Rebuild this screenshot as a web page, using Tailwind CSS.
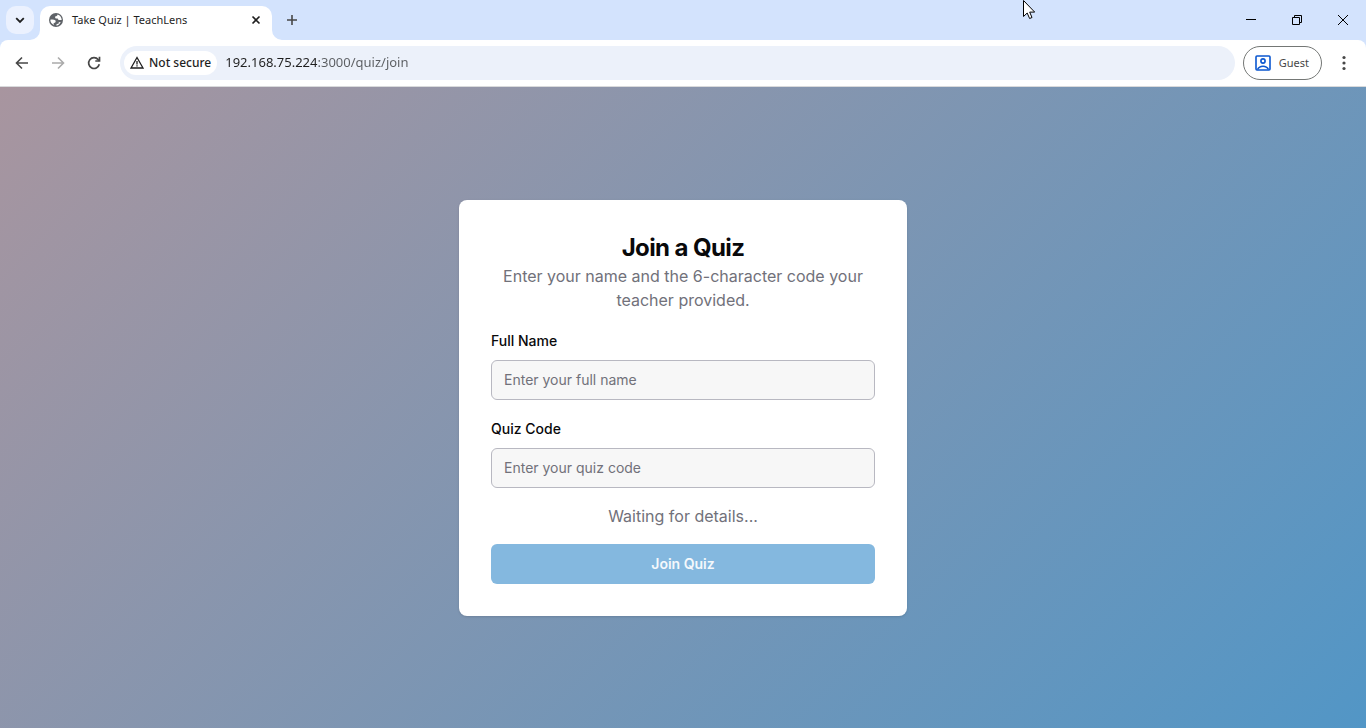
<!DOCTYPE html>
<html lang="en">
<head>
  <meta charset="UTF-8">
  <meta name="viewport" content="width=device-width, initial-scale=1.0">
  <title>Take Quiz | TeachLens</title>
  <script src="https://cdn.jsdelivr.net/npm/@tailwindcss/browser@4"></script>
</head>
<body class="relative flex flex-col min-h-screen bg-[#d3e3fd] font-['Noto_Sans',sans-serif] text-[#1f1f1f]">

  <!-- Tab strip -->
  <header class="flex items-start h-10 pl-1.5">
    <button type="button" aria-label="Search tabs" class="mt-1.5 flex size-7 items-center justify-center rounded-[10px] bg-[#ebf1fe]">
      <svg class="size-4" viewBox="0 0 16 16" fill="none" stroke="#1f1f1f" stroke-width="1.8"><path d="M4.2 6.2 8 10l3.8-3.8"/></svg>
    </button>
    <div class="relative ml-1.5 mt-1.5 flex h-[34px] w-58 items-center rounded-t-[10px] bg-white pl-2 pr-2 pb-1.5">
      <svg class="absolute bottom-0 -left-2.5 size-2.5" viewBox="0 0 10 10" fill="#fff"><path d="M10 0v10H0A10 10 0 0 0 10 0z"/></svg>
      <svg class="absolute bottom-0 -right-2.5 size-2.5" viewBox="0 0 10 10" fill="#fff"><path d="M0 0v10h10A10 10 0 0 1 0 0z"/></svg>
      <svg class="size-4" viewBox="0 0 16 16">
        <circle cx="8" cy="8" r="7" fill="#5f6368"/>
        <path fill="#fff" d="M9.600 2.400c-.2 1.200-.9 1.700-2.200 1.900-.5 1-.4 1.800.4 2.200l1.900.1c.4 1.300 1.300 1.700 2.500 1.400l1.500.1c0-2.700-1.700-5-4.100-5.700zM2.300 7.700c2.100-.4 3.900-.3 4.900.6.8.7.6 1.900-.3 2.400l-1.300.3.300 1.900c-2.100-.9-3.500-2.800-3.600-5.200zM8.500 13.700l.1-1.600 1.900-.3.300-1.500 1.900-.2c-.8 2-2.300 3.300-4.200 3.600z"/>
      </svg>
      <span class="ml-2 flex-1 text-[11px]">Take Quiz | TeachLens</span>
      <button type="button" aria-label="Close tab" class="flex size-4 items-center justify-center">
        <svg class="size-4" viewBox="0 0 16 16" fill="none" stroke="#1f1f1f" stroke-width="1.6"><path d="m4.500 4.500 7 7M11.500 4.500l-7 7"/></svg>
      </button>
    </div>
    <button type="button" aria-label="New tab" class="ml-3 mt-3 flex size-4 items-center justify-center">
      <svg class="size-4" viewBox="0 0 16 16" fill="none" stroke="#474747" stroke-width="1.6"><path d="M8 3v10M3 8h10"/></svg>
    </button>
    <div class="ml-auto flex h-10">
      <button type="button" aria-label="Minimize" class="flex w-[46px] items-center justify-center">
        <svg class="size-3" viewBox="0 0 12 12" fill="none" stroke="#000"><path d="M1 5.500h10"/></svg>
      </button>
      <button type="button" aria-label="Restore" class="flex w-[46px] items-center justify-center">
        <svg class="size-3" viewBox="0 0 12 12" fill="none" stroke="#000"><path d="M1.500 3.500h7v7h-7zM3.500 3.500v-2h7v7h-2"/></svg>
      </button>
      <button type="button" aria-label="Close" class="flex w-[46px] items-center justify-center">
        <svg class="size-3" viewBox="0 0 12 12" fill="none" stroke="#000"><path d="m1 1 10 10M11 1 1 11"/></svg>
      </button>
    </div>
  </header>

  <!-- Toolbar -->
  <nav class="flex h-[47px] items-center rounded-t-lg border-b border-[#d9dadc] bg-white pl-3 pr-3">
    <button type="button" aria-label="Back" class="flex size-5 items-center justify-center">
      <svg class="size-4" viewBox="0 0 16 16" fill="none" stroke="#474747" stroke-width="1.6"><path d="M14 8H3M8 2.500 2.500 8 8 13.500"/></svg>
    </button>
    <button type="button" aria-label="Forward" class="ml-4 flex size-5 items-center justify-center">
      <svg class="size-4" viewBox="0 0 16 16" fill="none" stroke="#ababab" stroke-width="1.6"><path d="M2 8h11M8 2.500 13.500 8 8 13.500"/></svg>
    </button>
    <button type="button" aria-label="Reload" class="ml-4 flex size-5 items-center justify-center">
      <svg class="size-4" viewBox="0 0 16 16" fill="none" stroke="#474747" stroke-width="1.7"><path d="M13.300 9.300A5.400 5.400 0 1 1 12.200 4.600L13.500 6"/><path d="M13.500 1.800V6H9.300"/></svg>
    </button>
    <div class="ml-4 flex h-[34px] flex-1 items-center rounded-full bg-[#ecf1fa] pl-1">
      <button type="button" class="flex h-6 items-center gap-1 rounded-full bg-white pl-[5px] pr-1.5 text-xs font-medium">
        <svg class="size-4" viewBox="0 0 16 16" fill="none" stroke="#1f1f1f" stroke-width="1.3"><path d="M8 2.500 14 13H2z"/><path d="M8 6v3.500M8 10.300v1.300"/></svg>
        Not secure
      </button>
      <!-- host is darker than the port and path -->
      <input type="text" aria-label="Address" value="192.168.75.224:3000/quiz/join" class="ml-2 min-w-0 flex-1 bg-linear-to-r from-[#1f1f1f] from-[92px] to-[#5a5d61] to-[92px] bg-clip-text text-[13px] text-transparent outline-none">
    </div>
    <button type="button" class="ml-2 flex h-[34px] items-center gap-2 rounded-full border border-[#747775] pl-[11px] pr-3 text-[11px] text-[#474747]">
      <svg class="size-4" viewBox="0 0 16 16" fill="none" stroke="#0b57d0" stroke-width="1.6"><rect x="1" y="1" width="14" height="14" rx="1"/><circle cx="8" cy="6" r="2.100"/><path d="M2.500 14.500c1.200-2.300 3-3.300 5.500-3.300s4.300 1 5.500 3.300"/></svg>
      Guest
    </button>
    <button type="button" aria-label="Menu" class="ml-3 flex size-5 items-center justify-center">
      <svg class="size-4" viewBox="0 0 16 16" fill="#474747"><circle cx="8" cy="2.500" r="1.600"/><circle cx="8" cy="8" r="1.600"/><circle cx="8" cy="13.500" r="1.600"/></svg>
    </button>
  </nav>

  <!-- Page -->
  <main class="flex flex-1 items-center justify-center bg-linear-[135deg] from-[#a8959f] to-[#5296c6] font-[Inter,sans-serif] text-[#09090b]">
    <section class="w-full max-w-md rounded-lg bg-white p-8 shadow-sm">
      <div class="text-center">
        <h1 class="text-2xl font-bold tracking-tight">Join a Quiz</h1>
        <p class="text-[#71717a]">Enter your name and the 6-character code your teacher provided.</p>
      </div>
      <form class="mt-4 space-y-4">
        <div>
          <label for="fullName" class="text-sm leading-none font-medium">Full Name</label>
          <input id="fullName" type="text" placeholder="Enter your full name" class="mt-2 block h-10 w-full rounded-md border border-[#b8b8c1] bg-[#f7f7f7] px-3 text-sm placeholder:text-[#71717a]">
        </div>
        <div>
          <label for="quizCode" class="text-sm leading-none font-medium">Quiz Code</label>
          <input id="quizCode" type="text" placeholder="Enter your quiz code" class="mt-2 block h-10 w-full rounded-md border border-[#b8b8c1] bg-[#f7f7f7] px-3 text-sm placeholder:text-[#71717a]">
        </div>
        <p class="text-center text-[#71717a]">Waiting for details...</p>
        <button type="submit" disabled class="h-10 w-full rounded-md bg-[#84b8df] text-sm font-semibold text-[#f4f8fc]">Join Quiz</button>
      </form>
    </section>
  </main>

  <!-- Mouse pointer -->
  <svg class="absolute top-0 left-3/4 -ml-0.5 h-5 w-3" viewBox="0 0 12 20" fill="#fff" stroke="#000"><path d="M.500.500v16l3.700-3.500 2.400 5.500 2.400-1-2.300-5.400h5z"/></svg>
</body>
</html>
